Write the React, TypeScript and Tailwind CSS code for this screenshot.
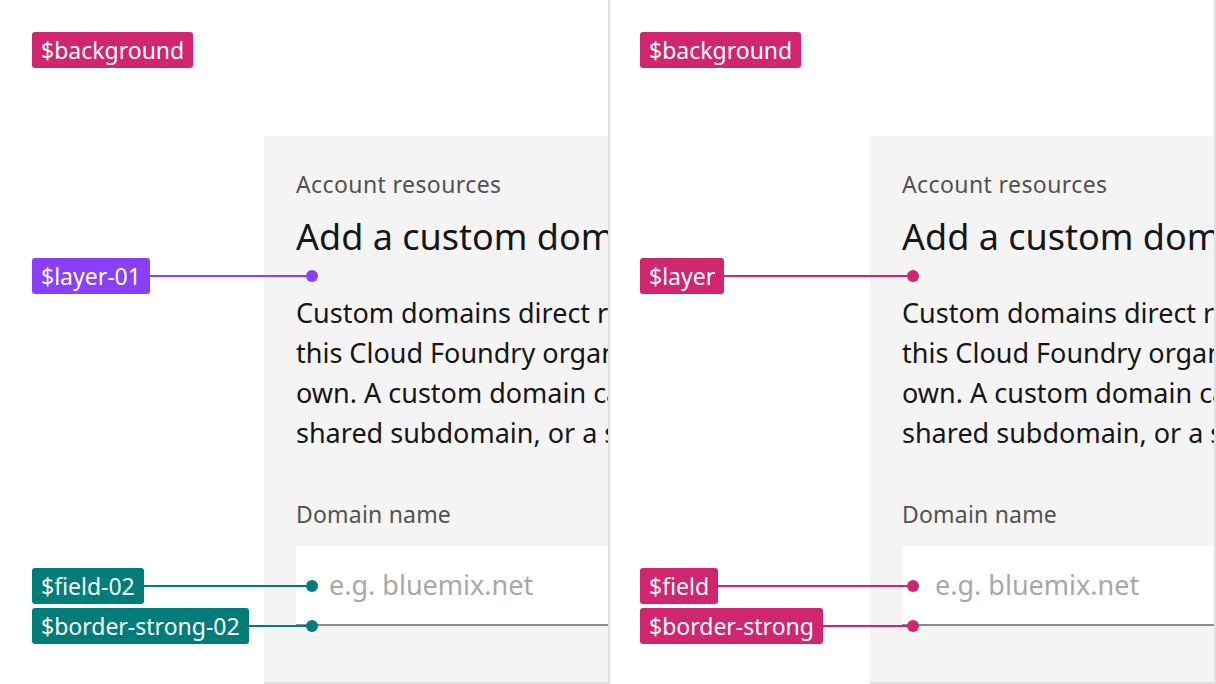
const font = { fontFamily: '"Noto Sans", "Open Sans", sans-serif' };

type Note = { label: string; color: string; top: string; width: string };

const bodyLines = [
  "Custom domains direct requests for your apps in",
  "this Cloud Foundry organization to a URL that you",
  "own. A custom domain can be a shared domain, a",
  "shared subdomain, or a shared domain and host.",
];

function Tag({ label, color }: { label: string; color: string }) {
  return (
    <div className={`h-9 shrink-0 rounded-[3px] px-[9px] text-[23px] leading-9 text-white ${color}`}>
      {label}
    </div>
  );
}

function Annotation({ note, left }: { note: Note; left: string }) {
  return (
    <div className={`absolute flex items-center ${left} ${note.top} ${note.width}`}>
      <Tag label={note.label} color={note.color} />
      <div className={`h-[2px] flex-1 ${note.color}`} />
      <div className={`h-3 w-3 shrink-0 rounded-full ${note.color}`} />
    </div>
  );
}

function Panel() {
  return (
    <div className="min-w-0 flex-1 overflow-hidden border-b-2 border-[#e0e0e0] bg-[#f4f4f4]">
      <div className="flex w-[640px] flex-col pt-8 pl-8 whitespace-nowrap">
        <div className="text-[23px] leading-8 tracking-[0.4px] text-[#525252]">Account resources</div>
        <div className="mt-[15px] text-[36px] leading-[44px] text-[#161616]">Add a custom domain</div>
        <div className="mt-[34px] text-[27px] leading-10 text-[#161616]">
          {bodyLines.map((l) => (
            <div key={l}>{l}</div>
          ))}
        </div>
        <div className="mt-[45px] text-[23px] leading-8 tracking-[0.2px] text-[#525252]">Domain name</div>
        <div className="mt-4 flex h-20 items-center border-b-2 border-[#8d8d8d] bg-white pl-[33px] text-[27px] text-[#a8a8a8]">
          e.g. bluemix.net
        </div>
      </div>
    </div>
  );
}

function Column({
  width,
  pad,
  panelGap,
  notes,
  noteLeft,
}: {
  width: string;
  pad: string;
  panelGap: string;
  notes: Note[];
  noteLeft: string;
}) {
  return (
    <div className={`relative flex h-full shrink-0 flex-col border-r-2 border-[#e0e0e0] pt-8 ${width} ${pad}`}>
      <div className="flex">
        <Tag label="$background" color="bg-[#d02670]" />
      </div>
      <div className={`mt-[68px] flex flex-1 ${panelGap}`}>
        <Panel />
      </div>
      {notes.map((n) => (
        <Annotation key={n.label} note={n} left={noteLeft} />
      ))}
    </div>
  );
}

export default function App() {
  const leftNotes: Note[] = [
    { label: "$layer-01", color: "bg-[#8a3ffc]", top: "top-[258px]", width: "w-[286px]" },
    { label: "$field-02", color: "bg-[#007d79]", top: "top-[568px]", width: "w-[286px]" },
    { label: "$border-strong-02", color: "bg-[#007d79]", top: "top-[608px]", width: "w-[286px]" },
  ];
  const rightNotes: Note[] = [
    { label: "$layer", color: "bg-[#d02670]", top: "top-[258px]", width: "w-[279px]" },
    { label: "$field", color: "bg-[#d02670]", top: "top-[568px]", width: "w-[279px]" },
    { label: "$border-strong", color: "bg-[#d02670]", top: "top-[608px]", width: "w-[279px]" },
  ];

  return (
    <div className="flex h-[684px] w-[1216px] overflow-hidden bg-white" style={font}>
      <Column width="w-[610px]" pad="pl-8" panelGap="ml-[232px]" notes={leftNotes} noteLeft="left-8" />
      <Column width="w-[606px]" pad="pl-[30px]" panelGap="ml-[230px]" notes={rightNotes} noteLeft="left-[30px]" />
    </div>
  );
}
